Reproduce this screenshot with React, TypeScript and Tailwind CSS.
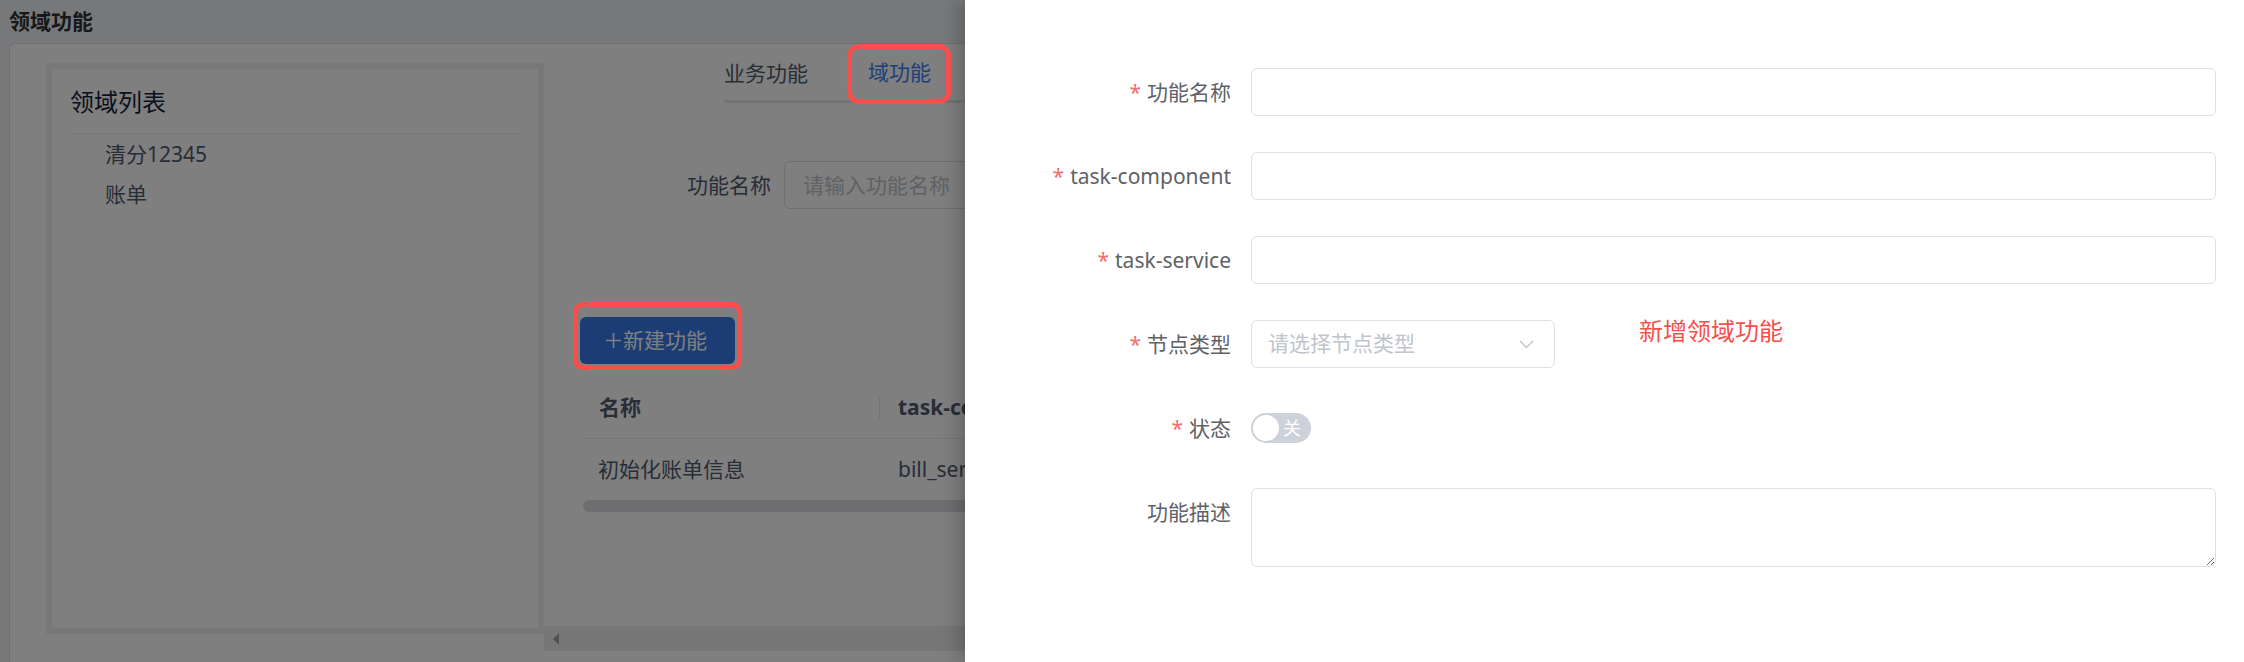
import React from 'react';

const Mark: React.FC<{ className: string }> = ({ className }) => (
  <span className={`pointer-events-none absolute z-30 border-[5px] border-[#f74f4d] ${className}`} />
);

const FormRow: React.FC<{ label: string; required?: boolean; children: React.ReactNode }> = ({ label, required, children }) => (
  <div className="mb-[36px] flex items-start">
    <label className="w-[286px] shrink-0 pr-[20px] text-right text-[21px] leading-[48px] text-[#606266]">
      {required && <span className="mr-[6px] text-[#f56c6c]">*</span>}
      {label}
    </label>
    <div className="mr-[28px] flex min-w-0 flex-1 items-start">{children}</div>
  </div>
);

const Page: React.FC = () => (
  <div className="flex h-full flex-col">
    <div className="flex h-[43px] shrink-0 items-center pl-[9px] text-[21px] font-bold text-[#303133]">领域功能</div>
    <div className="ml-[9px] flex flex-1 rounded-tl-[6px] border-l border-t border-[#dcdfe6] bg-white">
      {/* domain list */}
      <aside className="ml-[36px] mt-[19px] h-[571px] w-[498px] shrink-0 border-[6px] border-[#eff0f5] px-[18px] pt-[15px]">
        <div className="border-b border-[#e8eaec] pb-[13px] text-[24px] leading-[36px] text-[#17233d]">领域列表</div>
        <ul className="pl-[35px] text-[21px] text-[#515a6e]">
          <li className="h-[40px] leading-[40px]">清分12345</li>
          <li className="h-[40px] leading-[40px]">账单</li>
        </ul>
      </aside>

      <div className="flex min-w-0 flex-1 flex-col">
        <div className="flex-1">
          {/* tabs */}
          <div className="ml-[180px] flex h-[59px] shadow-[inset_0_-3px_0_#e4e7ed]">
            <div className="mr-[30px] text-[21px] leading-[59px] text-[#515a6e]">业务功能</div>
            <div className="relative mx-[30px] border-b-[3px] border-[#3c7ef0] text-[21px] leading-[56px] text-[#3c7ef0]">
              域功能
              <Mark className="-left-[21px] -right-[20px] top-0 -bottom-[4px] rounded-[12px]" />
            </div>
          </div>

          {/* search */}
          <div className="ml-[143px] mt-[58px] flex items-center">
            <span className="text-[21px] leading-[48px] text-[#515a6e]">功能名称</span>
            <input
              className="ml-[13px] h-[48px] w-[330px] rounded-[6px] border border-[#dcdee2] px-[18px] text-[21px] outline-none placeholder:text-[#c0c4cc]"
              placeholder="请输入功能名称"
            />
          </div>

          {/* new button */}
          <div className="relative ml-[36px] mt-[108px] w-[155px]">
            <button className="flex h-[47px] w-[155px] items-center rounded-[6px] bg-[#3779e8] pl-[26px] text-[21px] text-white">
              <svg width="15" height="15" viewBox="0 0 15 15" className="mr-[2px]">
                <path d="M7.5 0v15M0 7.5h15" stroke="currentColor" strokeWidth="1.6" />
              </svg>
              新建功能
            </button>
            <Mark className="-left-[7px] -right-[7px] -top-[15px] -bottom-[6px] rounded-[10px]" />
          </div>

          {/* table */}
          <div className="ml-[38px] mt-[13px] text-[21px] text-[#515a6e]">
            <div className="flex h-[62px] items-center border-b border-[#e8eaec] font-bold">
              <div className="w-[297px] pl-[17px]">名称</div>
              <span className="h-[24px] w-px bg-[#e8eaec]" />
              <div className="pl-[18px]">task-component</div>
            </div>
            <div className="flex h-[61px] items-center">
              <div className="w-[297px] pl-[16px]">初始化账单信息</div>
              <div className="pl-[19px]">bill_service</div>
            </div>
            <div className="ml-[1px] h-[12px] w-[800px] rounded-full bg-[#dcdde0]" />
          </div>
        </div>

        {/* horizontal scrollbar */}
        <div className="flex h-[25px] shrink-0 items-center bg-[#eeeeee] pl-[9px]">
          <svg width="6" height="12" viewBox="0 0 6 12">
            <path d="M6 0v12L0 6z" fill="#a3a3a3" />
          </svg>
        </div>
        <div className="h-[11px] shrink-0" />
      </div>
    </div>
  </div>
);

const Drawer: React.FC = () => (
  <div className="absolute inset-y-0 right-0 z-20 w-[1279px] bg-white pt-[68px] shadow-[-6px_0_18px_rgba(0,0,0,0.22)]">
    <FormRow label="功能名称" required>
      <input className="h-[48px] w-full rounded-[6px] border border-[#dcdfe6] px-[18px] text-[21px] outline-none" />
    </FormRow>
    <FormRow label="task-component" required>
      <input className="h-[48px] w-full rounded-[6px] border border-[#dcdfe6] px-[18px] text-[21px] outline-none" />
    </FormRow>
    <FormRow label="task-service" required>
      <input className="h-[48px] w-full rounded-[6px] border border-[#dcdfe6] px-[18px] text-[21px] outline-none" />
    </FormRow>
    <FormRow label="节点类型" required>
      <div className="flex h-[48px] w-[304px] items-center justify-between rounded-[6px] border border-[#dcdfe6] pl-[16px] pr-[20px]">
        <span className="text-[21px] text-[#c0c4cc]">请选择节点类型</span>
        <svg width="15" height="9" viewBox="0 0 15 9">
          <path d="M1 1l6.5 6.5L14 1" fill="none" stroke="#c0c4cc" strokeWidth="1.4" />
        </svg>
      </div>
      <span className="-mt-[1px] ml-[84px] text-[24px] leading-[24px] text-[#f74f4d]">新增领域功能</span>
    </FormRow>
    <FormRow label="状态" required>
      <div className="mt-[9px] flex h-[30px] w-[60px] items-center rounded-full bg-[#cdd1da] px-[2px]">
        <span className="h-[26px] w-[26px] rounded-full bg-white" />
        <span className="ml-[4px] text-[18px] leading-none text-white">关</span>
      </div>
    </FormRow>
    <FormRow label="功能描述">
      <textarea className="h-[79px] w-full rounded-[6px] border border-[#dcdfe6] px-[18px] py-[8px] text-[21px] outline-none" />
    </FormRow>
  </div>
);

export default function App() {
  return (
    <div className="relative h-[662px] w-[2244px] overflow-hidden bg-[#eff0f5] font-['Noto_Sans','Noto_Sans_CJK_SC',sans-serif]">
      <Page />
      <div className="absolute inset-0 z-10 bg-black/50" />
      <Drawer />
    </div>
  );
}
